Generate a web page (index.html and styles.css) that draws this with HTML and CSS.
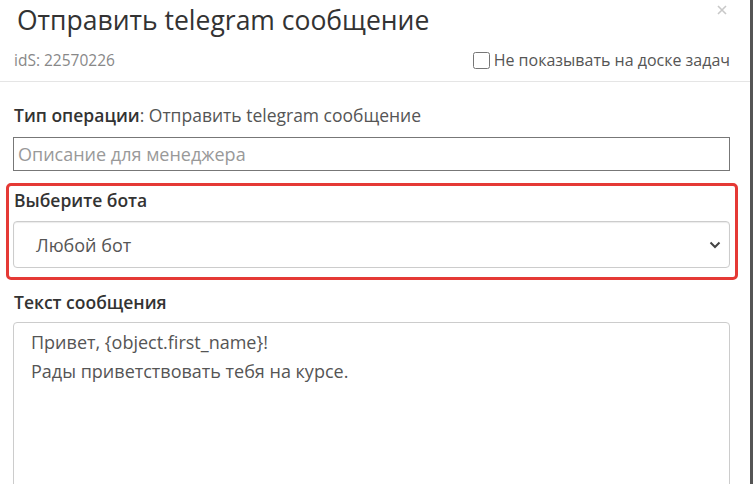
FILE: index.html
```html
<!DOCTYPE html>
<html lang="ru">
<head>
    <meta charset="UTF-8">
    <meta name="viewport" content="width=device-width, initial-scale=1.0">
    <title>Отправить telegram сообщение</title>
    <link rel="stylesheet" href="styles.css">
</head>
<body>

    <div class="modal">
        <div class="modal-header">
            <div class="header-top">
                <h3 class="modal-title">Отправить telegram сообщение</h3>
                <svg class="close" width="10" height="10" viewBox="0 0 10 10">
                    <path d="M1 1 L9 9 M9 1 L1 9" stroke="#c8c8c8" stroke-width="1.6"/>
                </svg>
            </div>
            <div class="header-meta">
                <span class="ids">idS: 22570226</span>
                <label class="hide-check">
                    <input type="checkbox">
                    Не показывать на доске задач
                </label>
            </div>
        </div>

        <div class="modal-body">
            <div class="op-type"><b>Тип операции</b>: Отправить telegram сообщение</div>
            <input class="desc-input" type="text" placeholder="Описание для менеджера">

            <div class="highlight">
                <div class="field-label">Выберите бота</div>
                <div class="select-box">
                    <span>Любой бот</span>
                    <svg class="chevron" width="12" height="8" viewBox="0 0 12 8">
                        <path d="M1.5 1.5 L6 6 L10.5 1.5" fill="none" stroke="#444" stroke-width="2"/>
                    </svg>
                </div>
            </div>

            <div class="field-label msg-label">Текст сообщения</div>
            <div class="textarea">
                <p>Привет, {object.first_name}!</p>
                <p>Рады приветствовать тебя на курсе.</p>
            </div>
        </div>
    </div>

</body>
</html>
```

FILE: styles.css
```css
/* Сброс */
* {
    margin: 0;
    padding: 0;
    box-sizing: border-box;
    font-family: "Open Sans", Lato, sans-serif;
}

body {
    background-color: #555;
    height: 484px;
    overflow: hidden;
}

.modal {
    background: white;
    width: 750px;
    height: 484px;
    overflow: hidden;
}

.modal-header {
    border-bottom: 1px solid #e5e5e5;
    padding: 0 23px 0 14px;
    height: 82px;
}

.header-top {
    display: flex;
    justify-content: space-between;
    align-items: flex-start;
}

.modal-title {
    font-size: 26.5px;
    font-weight: normal;
    color: #333;
    margin-left: 3px;
    line-height: 40px;
}

.close {
    margin-top: 5px;
}

.header-meta {
    display: flex;
    justify-content: space-between;
    align-items: center;
    margin-top: 9px;
}

.ids {
    font-size: 15.5px;
    color: #888;
}

.hide-check {
    display: flex;
    align-items: center;
    font-size: 16px;
    color: #555;
    margin-right: -3px;
}

.hide-check input {
    width: 17px;
    height: 17px;
    margin-right: 4px;
}

.modal-body {
    padding: 21px 21px 0 13px;
}

.op-type {
    font-size: 17.5px;
    color: #555;
    padding-left: 1px;
    line-height: 24px;
}

.op-type b {
    color: #333;
    font-weight: 600;
}

.desc-input {
    display: block;
    width: 717px;
    height: 34px;
    margin-top: 10px;
    border: 1px solid #777;
    padding: 0 4px;
    font-size: 18px;
}

.desc-input::placeholder {
    color: #999;
}

.highlight {
    margin: 12px 0 0 -7px;
    width: 732px;
    border: 3px solid #e53935;
    border-radius: 5px;
    padding: 2px 5px 9px 4px;
}

.field-label {
    font-size: 17.5px;
    font-weight: 600;
    color: #333;
    padding-left: 1px;
    line-height: 24px;
}

.select-box {
    display: flex;
    justify-content: space-between;
    align-items: center;
    height: 47px;
    margin-top: 9px;
    border: 1px solid #ccc;
    border-radius: 4px;
    box-shadow: inset 0 1px 1px rgba(0, 0, 0, 0.08);
    padding: 0 8px 0 22px;
    font-size: 18px;
    color: #555;
}

.msg-label {
    margin-top: 10px;
}

.textarea {
    margin-top: 8px;
    width: 717px;
    height: 200px;
    border: 1px solid #ccc;
    border-radius: 4px;
    padding: 5px 17px;
    font-size: 18px;
    color: #555;
}

.textarea p {
    line-height: 29px;
}
```
